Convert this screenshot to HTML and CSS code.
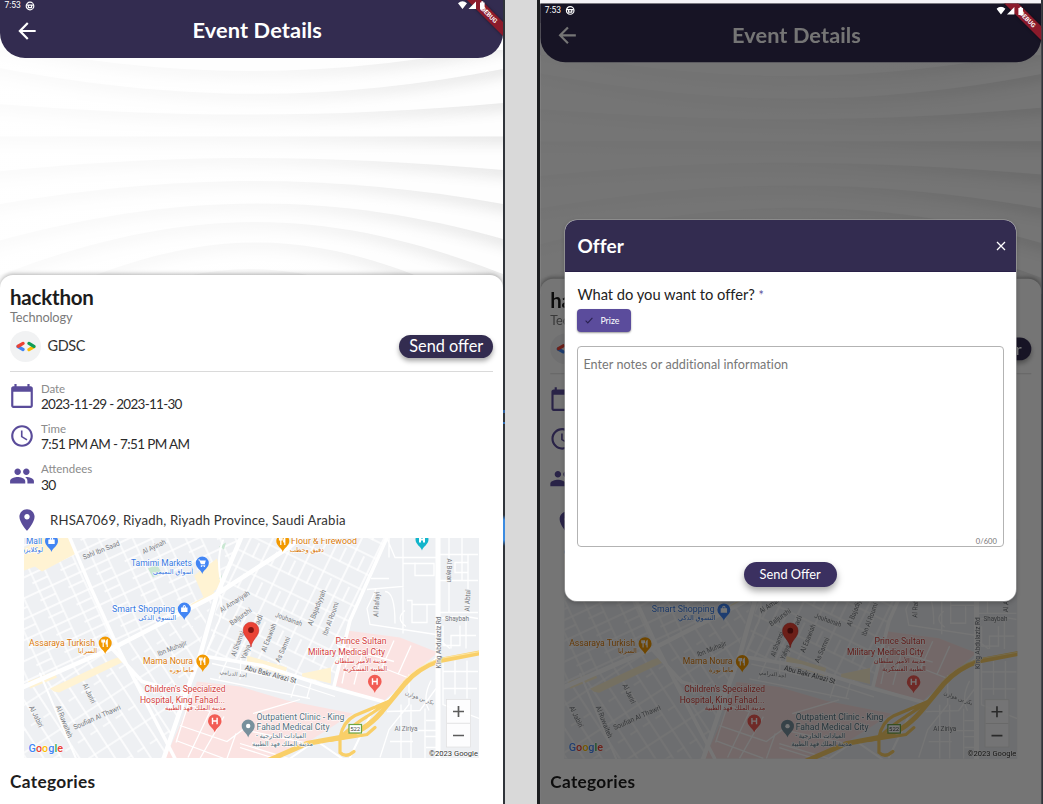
FILE: index.html
```html
<!DOCTYPE html>
<html lang="en">
<head>
<meta charset="utf-8">
<title>Event Details</title>
<link rel="stylesheet" href="styles.css">
</head>
<body>
<main class="board">
  <section class="phone phone-plain"><div class="screen"></div></section>
  <section class="phone phone-dialog">
    <div class="screen dimmed"></div>
    <div class="dialog">
      <header class="dialog-head">
        <h2 class="dialog-title">Offer</h2>
        <svg class="close" viewBox="0 0 10 10"><path d="M1 1l8 8M9 1l-8 8"/></svg>
      </header>
      <div class="dialog-body">
        <p class="question"><span class="question-text">What do you want to offer?</span> <span class="star">*</span></p>
        <span class="chip"><svg class="check" viewBox="0 0 8 7"><path d="M.6 3.6l2.2 2.3L7.4.8"/></svg><span class="chip-text">Prize</span></span>
        <div class="notes"><span class="placeholder">Enter notes or additional information</span><span class="counter">0/600</span></div>
        <div class="submit"><span class="submit-text">Send Offer</span></div>
      </div>
    </div>
  </section>
</main>

<template id="event-screen">
  <header class="appbar">
    <svg class="back" viewBox="0 0 24 24"><path d="M20 11H7.83l5.59-5.59L12 4l-8 8 8 8 1.41-1.41L7.83 13H20v-2z"/></svg>
    <h1 class="appbar-title">Event Details</h1>
  </header>
  <svg class="hero" viewBox="0 50 503 240">
    <defs>
      <filter id="fold" x="-5%" y="-5%" width="110%" height="110%">
        <feOffset in="SourceAlpha" dy="9" result="o"/>
        <feGaussianBlur in="o" stdDeviation="6" result="b"/>
        <feFlood flood-color="#000" flood-opacity=".165"/>
        <feComposite in2="b" operator="out" result="s"/>
        <feComposite in="s" in2="SourceAlpha" operator="in" result="i"/>
        <feMerge><feMergeNode in="SourceGraphic"/><feMergeNode in="i"/></feMerge>
      </filter>
      <linearGradient id="wash"><stop offset="0" stop-color="#fff" stop-opacity=".8"/><stop offset=".55" stop-color="#fff" stop-opacity=".62"/><stop offset="1" stop-color="#fff" stop-opacity="0"/></linearGradient>
    </defs>
    <rect y="50" width="503" height="240" fill="#fdfdfd"/>
    <g fill="#fefefe">
      <path filter="url(#fold)" d="M-60 30Q250 112 563 30V340H-60Z"/>
      <path filter="url(#fold)" d="M-60 56C160 104 320 104 503 69L563 56V340H-60Z"/>
      <path filter="url(#fold)" d="M-60 99C160 119 320 119 503 103L563 98V340H-60Z"/>
      <path filter="url(#fold)" d="M-60 136.500H563V340H-60Z"/>
      <path filter="url(#fold)" d="M-60 178C150 153 300 153 503 170L563 176V340H-60Z"/>
      <path filter="url(#fold)" d="M-60 215C150 174 310 170 503 204L563 215V340H-60Z"/>
      <path filter="url(#fold)" d="M-60 258C150 191 320 187 503 239L563 258V340H-60Z"/>
      <path filter="url(#fold)" d="M-60 300C160 203 310 199 503 274L563 300V340H-60Z"/>
      <path filter="url(#fold)" d="M-40 340C190 212 310 217 503 315L563 350V370H-60Z"/>
      <path filter="url(#fold)" d="M80 320Q250 218 420 320V370H80Z"/>
    </g>
    <rect y="50" width="503" height="240" fill="url(#wash)"/>
  </svg>
  <article class="card">
    <h2 class="event-name">hackthon</h2>
    <p class="event-kind">Technology</p>
    <div class="host">
      <span class="avatar"><svg viewBox="0 0 20 11"><g fill="none" stroke-width="3.300" stroke-linecap="round"><path d="M2 5.600L7 8.500" stroke="#4285f4"/><path d="M2.200 5.200L7 2.400" stroke="#ea4335"/><path d="M13 8.600l4.800-2.800" stroke="#fbbc04"/><path d="M13 2.400l4.900 2.900" stroke="#0f9d58"/></g></svg></span>
      <span class="host-name">GDSC</span>
      <span class="send"><span class="send-text">Send offer</span></span>
    </div>
    <dl class="facts">
      <div class="fact"><svg viewBox="0 0 24 24"><path d="M20 3h-1V1h-2v2H7V1H5v2H4c-1.100 0-2 .9-2 2v16c0 1.100.9 2 2 2h16c1.100 0 2-.9 2-2V5c0-1.100-.9-2-2-2zm0 18H4V8h16v13z"/></svg><div><dt class="l-date">Date</dt><dd class="v-date">2023-11-29 - 2023-11-30</dd></div></div>
      <div class="fact"><svg viewBox="0 0 24 24"><path d="M11.990 2C6.470 2 2 6.480 2 12s4.470 10 9.990 10C17.520 22 22 17.520 22 12S17.520 2 11.990 2zM12 20c-4.420 0-8-3.580-8-8s3.580-8 8-8 8 3.580 8 8-3.580 8-8 8zm.5-13H11v6l5.250 3.150.75-1.230-4.500-2.670z"/></svg><div><dt class="l-time">Time</dt><dd class="v-time">7:51 PM AM - 7:51 PM AM</dd></div></div>
      <div class="fact"><svg viewBox="0 0 24 24"><path d="M16 11c1.660 0 2.990-1.340 2.990-3S17.660 5 16 5c-1.660 0-3 1.340-3 3s1.340 3 3 3zm-8 0c1.660 0 2.990-1.340 2.990-3S9.660 5 8 5C6.340 5 5 6.340 5 8s1.340 3 3 3zm0 2c-2.330 0-7 1.170-7 3.500V19h14v-2.500c0-2.330-4.670-3.500-7-3.500zm8 0c-.29 0-.62.02-.97.05 1.160.84 1.970 1.970 1.970 3.450V19h6v-2.500c0-2.330-4.670-3.500-7-3.500z"/></svg><div><dt class="l-att">Attendees</dt><dd class="v-att">30</dd></div></div>
    </dl>
    <div class="place"><svg viewBox="0 0 24 24"><path d="M12 2C8.130 2 5 5.130 5 9c0 5.250 7 13 7 13s7-7.750 7-13c0-3.870-3.130-7-7-7zm0 9.500c-1.380 0-2.500-1.120-2.500-2.500s1.120-2.500 2.500-2.500 2.500 1.120 2.500 2.500-1.120 2.500-2.500 2.500z"/></svg><span class="address">RHSA7069, Riyadh, Riyadh Province, Saudi Arabia</span></div>
    <svg class="map" viewBox="24 537.500 454.500 220.500">
      <defs>
        <pattern id="gridA" width="31" height="19" patternUnits="userSpaceOnUse" patternTransform="rotate(-25)"><path d="M0 1H31M0 10H17M3 0V19M17 0V19" fill="none" stroke="#fff" stroke-width="1.300"/></pattern>
        <pattern id="gridB" width="34" height="20" patternUnits="userSpaceOnUse" patternTransform="rotate(-64)"><path d="M0 1H34M18 11H34M3 0V20M19 0V20" fill="none" stroke="#fff" stroke-width="1.300"/></pattern>
        <pattern id="gridC" width="40" height="15" patternUnits="userSpaceOnUse" patternTransform="rotate(57)"><path d="M0 1H40M4 0V15M25 0V9" fill="none" stroke="#fff" stroke-width="1.300"/></pattern>
      </defs>
      <rect x="24" y="537" width="456" height="222" fill="#eef0f3"/>
      <path fill="url(#gridA)" d="M24 537H242L215 597 24 687Z"/>
      <path fill="url(#gridC)" d="M24 687L118 645 213 596 188 687 165 758H24Z"/>
      <path fill="url(#gridB)" d="M242 537H387L347 627 334 685 205 655 220 592Z"/>
      <path fill="#fff3d3" d="M43 537H70L76 553 42 571 35 566 24 570V548ZM194 575L217 558 223 584 204 598ZM192 603L214 591 216 596 183 614ZM28 681l26-10 3 6-27 11zM50 688l62-29 12-4 2 5-67 32-5-1zM247 655l40 12-2 8-38-12zM302 673l29-6v16l-29-7z"/>
      <path fill="#c9e7d2" d="M148 568l9-4 5 9-9 4zM219 546l7-4-2 7zM219 578l5 3-3-7z"/>
      <path fill="#fbe3e2" d="M347 630L400 637 438 652 420 667 383 701 335 685ZM197 681L240 686 287 700 353 713 307 742 270 758H165L180 725Z"/>
      <g fill="none" stroke="#fff" stroke-width="1.300">
        <path d="M387 538L395 557H436M371 578H389M367 589L403 586V537M376 589L367 608 370 624 436 634M403 586V633M403 563H434V575H415V562M389 537V557M385 591q10 0 10 32M407 600h5v4h24M412 604v18h15v-18M405 610q-10 8 1 16M449 537V612M462 537V580M440 554H478M440 580H478M440 612H478M468 554V612M455 562h13v10h-13zM440 618q20-4 38 0M443 625v20h17v-20M466 618v30M451 648v-13h25M440 640l10 8"/>
        <path d="M384 702L439 655M387 711L420 710 436 688M409 674v30l-20 25-9 28M401 704v54M411 704v54M425 708v50M401 730h37M390 741h23M426 720h12M425 736h14M426 747h13M431 680q-9 18-2 30M443 662v42l36 14M455 660v34M443 671h35M443 688h34M467 660v38"/>
        <path d="M180 725l47 16 16-12 65 14M187 704l23 7-22 46M193 689l-17 53M224 716l-24 42M176 740l48 18M236 733l-9 25M240 743l49 15M240 747l35 11M253 713l47-14M337 645l57 16M350 645l-8 38M363 650l-9 34M394 640l-12 27 28 11M411 645l-13 29M210 678l100 20M212 663l70 16 53 17M227 660l-8 18M298 675l-7 22M312 679l-5 18M240 679l1-24"/>
      </g>
      <g fill="none" stroke="#fff" stroke-linecap="round" stroke-linejoin="round">
        <path stroke-width="3.500" d="M68 533L92 590 117 645 145 700 175 758M112 648L142 681 183 692"/>
        <path stroke-width="4.500" d="M20 688L118 645 213 596 290 546 305 533M242 535L217 594 200 655 187 690 163 760"/>
        <path stroke-width="3.500" d="M200 655L262 665 324 685 383 701M387 537L350 620 334 686"/>
        <path stroke-width="2" d="M223 540Q215 560 223 589M220 595Q224 613 217 625L205 655M40 673L76 758M316 740L290 758M316 740l29 20M375 705L350 757"/>
        <path stroke-width="5" d="M438 535V760"/>
      </g>
      <g fill="none" stroke="#f9cf68" stroke-linecap="round">
        <path stroke-width="5" d="M482 652L440 660Q419 667 405 683L382 711Q363 733 340 737L307 743 266 761"/>
        <path stroke-width="3.200" d="M391 700L355 715Q343 721 340 737V752Q346 758 354 751M340 737Q355 723 367 716L391 700M330 740L367 734 375 727"/>
      </g>
      <path d="M480 651L440 658Q415 665 397 687" stroke="#fff0bd" stroke-width=".7" fill="none"/>
      <g class="street">
        <text transform="translate(102 552) rotate(-22)" textLength="39">Sahl Ibn Saad</text>
        <text transform="translate(155 548.500) rotate(-25)" textLength="25">Al Ayinah</text>
        <text transform="translate(236 603) rotate(-33)" textLength="34">Al Amariyah</text>
        <text transform="translate(242 618) rotate(-35)" textLength="25">Baljurshi</text>
        <text transform="translate(240 644) rotate(-70)" textLength="26">Al Shamsi</text>
        <text transform="translate(248 652) rotate(-68)" textLength="15">Yahya</text>
        <text transform="translate(261 620) rotate(-68)" textLength="10">adi</text>
        <text transform="translate(288 621) rotate(20)" textLength="28">Jouhainah</text>
        <text transform="translate(271 638) rotate(-68)" textLength="30">Al Esawiah</text>
        <text transform="translate(285 650) rotate(-66)" textLength="27">As Samni</text>
        <text transform="translate(319 608) rotate(-68)" textLength="38">Al Bajadiyyah</text>
        <text transform="translate(333 619) rotate(-70)" textLength="35">Ibn Al Roumi</text>
        <text transform="translate(379 604) rotate(-87)" textLength="25">Al Rafayi</text>
        <text transform="translate(447 570) rotate(90)" textLength="24">Al Bayan</text>
        <text transform="translate(470 600) rotate(-88)" textLength="22">Al Abtal</text>
        <text transform="translate(457 620)" textLength="24">Shaybah</text>
        <text transform="translate(441 642) rotate(-90)" textLength="52">King Abdulaziz Rd</text>
        <text transform="translate(173 650) rotate(-22)" textLength="31">Ibn Muhajir</text>
        <text class="strong" transform="translate(270 676) rotate(15)" textLength="53">Abu Bakr Alrazi St</text>
        <text class="street-ar" transform="translate(233 675) rotate(8)">احد الدرامي</text>
        <text class="street-ar" transform="translate(419 699) rotate(20)">بكر بن هوازن</text>
        <text transform="translate(406 730)" textLength="23">Al Ziriya</text>
        <text transform="translate(87 694) rotate(64)" textLength="21">Al Jariri</text>
        <text transform="translate(34 717) rotate(64)" textLength="23">Al Jabiri</text>
        <text transform="translate(62 722) rotate(68)" textLength="34">Al Ruwaiteh</text>
        <text transform="translate(98 719) rotate(-24)" textLength="51">Soufian Al Thawri</text>
      </g>
      <g class="poi blue">
        <text x="26" y="543" textLength="16">Mall</text><text class="ar" x="43" y="551" direction="rtl">لوكلايزن</text>
        <text x="131" y="565" textLength="61">Tamimi Markets</text><text class="ar" x="193" y="573" direction="rtl">أسواق التميمي</text>
        <text x="112" y="611" textLength="63">Smart Shopping</text><text class="ar" x="176" y="619" direction="rtl">التسوق الذكي</text>
      </g>
      <g class="poi orange">
        <text x="29" y="645" textLength="66">Assaraya Turkish</text><text class="ar" x="97" y="652" direction="rtl">السرايا</text>
        <text x="143" y="663" textLength="50">Mama Noura</text><text class="ar" x="194" y="671" direction="rtl">ماما نورة</text>
        <text x="291" y="543" textLength="66">Flour &amp; Firewood</text><text class="ar" x="324" y="551" direction="rtl">دقيق وحطب</text>
      </g>
      <g class="poi red">
        <text x="335.500" y="643" textLength="51">Prince Sultan</text><text x="308" y="654" textLength="77">Military Medical City</text>
        <text class="ar" x="387" y="662" direction="rtl">مدينة الأمير سلطان</text><text class="ar" x="387" y="670.500" direction="rtl">الطبية العسكرية</text>
        <text x="144.500" y="691" textLength="81">Children's Specialized</text><text x="140" y="702" textLength="85">Hospital, King Fahad...</text>
        <text class="ar" x="226" y="709.500" direction="rtl">مدينة الملك فهد الطبية</text>
      </g>
      <g class="poi slate">
        <text x="256.500" y="719" textLength="88">Outpatient Clinic - King</text><text x="256.500" y="729.500" textLength="73">Fahad Medical City</text>
        <text class="ar" x="306" y="737.500" direction="rtl">العيادات الخارجية -</text><text class="ar" x="313" y="745.500" direction="rtl">مدينة الملك فهد الطبية</text>
      </g>
      <g transform="translate(51.500 540.500)"><path fill="#4285f4" d="M0 11C-1 7-6.500 5-6.500 0a6.500 6.500 0 0 1 13 0C6.500 5 1 7 0 11Z"/><path fill="#fff" d="M-3.200-1.500h6.400v4.500h-6.400zM-1.700-1.500q0-2.500 1.700-2.500t1.700 2.500h-1q0-1.500-.7-1.500t-.7 1.500z"/></g>
      <g transform="translate(202.300 562.500)"><path fill="#4285f4" d="M0 11C-1 7-6.500 5-6.500 0a6.500 6.500 0 0 1 13 0C6.500 5 1 7 0 11Z"/><path fill="#fff" d="M-4-3.500h1.500l.5 1H3.500L2.500 1h-4L-3-2.700h-1zM-1.500 1.700H3v.7h-4.500z"/><circle cx="-.8" cy="3.200" r=".8" fill="#fff"/><circle cx="2" cy="3.200" r=".8" fill="#fff"/></g>
      <g transform="translate(184.300 608.500)"><path fill="#4285f4" d="M0 11C-1 7-6.500 5-6.500 0a6.500 6.500 0 0 1 13 0C6.500 5 1 7 0 11Z"/><path fill="#fff" d="M-3.200-1.500h6.400v4.500h-6.400zM-1.700-1.500q0-2.500 1.700-2.500t1.700 2.500h-1q0-1.500-.7-1.500t-.7 1.500z"/></g>
      <g transform="translate(105.200 642.500)"><path fill="#f29900" d="M0 11C-1 7-6.500 5-6.500 0a6.500 6.500 0 0 1 13 0C6.500 5 1 7 0 11Z"/><path stroke="#fff" stroke-width="1.200" fill="none" d="M-2-3.500V4M-3.300-3.500V-1h2.600v-2.500M2 4V-3q-1.400 1-1 4h1"/></g>
      <g transform="translate(202.800 660.500)"><path fill="#f29900" d="M0 11C-1 7-6.500 5-6.500 0a6.500 6.500 0 0 1 13 0C6.500 5 1 7 0 11Z"/><path stroke="#fff" stroke-width="1.200" fill="none" d="M-2-3.500V4M-3.300-3.500V-1h2.600v-2.500M2 4V-3q-1.400 1-1 4h1"/></g>
      <g transform="translate(282.800 540.500)"><path fill="#f29900" d="M0 11C-1 7-6.500 5-6.500 0a6.500 6.500 0 0 1 13 0C6.500 5 1 7 0 11Z"/><path stroke="#fff" stroke-width="1.200" fill="none" d="M-2-3.500V4M-3.300-3.500V-1h2.600v-2.500M2 4V-3q-1.400 1-1 4h1"/></g>
      <g transform="translate(422 539)"><path fill="#12b5cb" d="M0 11C-1 7-6.500 5-6.500 0a6.500 6.500 0 0 1 13 0C6.500 5 1 7 0 11Z"/><path fill="#fff" d="M-3-3h2v2h2v-2h2v6h-2v-2h-2v2h-2z"/></g>
      <g transform="translate(374.800 681)"><path fill="#f25c54" d="M0 11.500C-1 7-6.800 5-6.800 0a6.800 6.800 0 0 1 13.600 0C6.800 5 1 7 0 11.500Z"/><path stroke="#fff" stroke-width="1.400" fill="none" d="M-2.300-3.200v6.400M2.300-3.200v6.400M-2.300 0h4.600"/></g>
      <g transform="translate(214.800 720.500)"><path fill="#f25c54" d="M0 11.500C-1 7-6.800 5-6.800 0a6.800 6.800 0 0 1 13.600 0C6.800 5 1 7 0 11.500Z"/><path stroke="#fff" stroke-width="1.400" fill="none" d="M-2.300-3.200v6.400M2.300-3.200v6.400M-2.300 0h4.600"/></g>
      <g transform="translate(248.200 725.500)"><path fill="#78909c" d="M0 11.500C-1 7-6.500 5-6.500 0a6.500 6.500 0 0 1 13 0C6.500 5 1 7 0 11.500Z"/><circle r="2.200" fill="#fff"/></g>
      <g transform="translate(251 629.500)"><path fill="#ea4335" stroke="#c5221f" stroke-width=".5" d="M0 17C-1 9-7.800 7-7.800 0a7.800 7.800 0 0 1 15.600 0C7.800 7 1 9 0 17Z"/><circle r="2.900" fill="#811411"/></g>
      <g><rect x="349" y="724" width="12.500" height="8.500" fill="#fff" stroke="#6ba543" stroke-width="1.200"/><text class="shield" x="355.200" y="730.500">522</text></g>
      <g class="logo"><text x="28.500" y="751" textLength="34.500"><tspan fill="#4285f4">G</tspan><tspan fill="#ea4335">o</tspan><tspan fill="#fbbc04">o</tspan><tspan fill="#4285f4">g</tspan><tspan fill="#34a853">l</tspan><tspan fill="#ea4335">e</tspan></text></g>
      <rect x="446.500" y="699" width="24" height="47.500" fill="#fff" fill-opacity=".85" stroke="#ddd" stroke-width=".6"/>
      <path d="M447 722.800h23" stroke="#ddd" stroke-width=".8"/>
      <path d="M453 711h11M458.500 705.500v11M453 735h11" stroke="#5c5c5c" stroke-width="1.700"/>
      <text class="copy" x="429" y="755.300" textLength="49">©2023 Google</text>
    </svg>
    <h3 class="section-title">Categories</h3>
  </article>
</template>

<template id="screen-status">
  <div class="ribbon">DEBUG</div>
  <div class="status">
    <span class="clock">7:53</span>
    <svg class="globe" viewBox="0 0 10 10"><circle cx="5" cy="5" r="3.800"/><path d="M1.500 4.200h7M3.400 4.400v2.200h3.200V4.400"/></svg>
    <svg class="signals" viewBox="0 0 30 9"><path d="M0 2.200Q4.500-1.500 9 2.200L4.500 8ZM18 .5V8H10.500ZM22 1.500h1.300V.2h2V1.500h1.300V8.500H22Z"/></svg>
  </div>
</template>
<script src="app.js"></script>
</body>
</html>
```
FILE: app.js
```js
// Both phones show the same event; the second one is dimmed behind its dialog.
const eventScreen = document.getElementById('event-screen');
const status = document.getElementById('screen-status');

document.querySelectorAll('.screen').forEach((screen) => {
  const app = document.createElement('div');
  app.className = 'app';
  app.append(eventScreen.content.cloneNode(true));
  screen.append(app, status.content.cloneNode(true));
});

document.querySelectorAll('.map text[textLength], .logo text').forEach((label) => {
  label.setAttribute('lengthAdjust', 'spacingAndGlyphs');
});
```
FILE: styles.css
```css
* { box-sizing: border-box; }
body { margin: 0; font-family: Lato, "Open Sans", sans-serif; color: #222; }
h1, h2, h3, p, dl, dd { margin: 0; }
svg { display: block; flex: none; }

.board { width: 1043px; height: 804px; display: flex; justify-content: space-between; background: #d9d9d9; overflow: hidden; }
.phone { position: relative; height: 804px; overflow: hidden; flex: none; }
.phone-plain { width: 505px; padding-right: 2px; background: linear-gradient(#30343a 0 410px, #2c5f9c 410px 413px, #30343a 413px 422px, #2f6fb5 422px 424px, #30343a 424px 515px, #3b8be0 520px 540px, #30343a 546px); }
.phone-dialog { width: 506px; padding: 0 2px 0 3px; background: linear-gradient(90deg, #1b1d1f 0 3px, transparent 3px 504px, #30343a 504px), #f4f2f6; }

.screen { position: relative; width: 503px; height: 804px; overflow: hidden; background: #fff; }
.dimmed { top: -1.5px; height: 806px; transform: translate(.3px, 4.5px) scale(.996, .994); transform-origin: 0 0; background: #757575; }
.dimmed .app { padding-top: 1.5px; filter: brightness(.46); background: #332c50 linear-gradient(#332c50 0 20px, #fff 20px); }
.dimmed .status, .dimmed .ribbon { margin-top: 1.5px; }
.app { height: 100%; background: #fff; display: flex; flex-direction: column; }

.appbar { position: relative; z-index: 1; width: 503px; height: 57.5px; flex: none; background: #332c50; border-radius: 0 0 25px 25px; display: grid; grid-template-columns: 40px 1fr 33px; align-items: center; padding: 4px 0 0 14px; }
.back { width: 26px; height: 26px; fill: #fff; }
.appbar-title { text-align: center; color: #fff; font-size: 21.8px; line-height: 26px; font-weight: 700; padding: 0 9.5px 1px 0; letter-spacing: .1px; }
.hero { width: 503px; height: 240px; margin-top: -7.5px; }

.card { position: relative; margin-top: -15px; height: 540px; flex: none; background: #fff; border-radius: 13px 13px 0 0; box-shadow: 0 -1px 4px rgba(0,0,0,.3); padding: 9.5px 10px 0; }
.event-name { font-size: 20.5px; line-height: 24px; font-weight: 700; color: #1c1c1c; letter-spacing: -.2px; }
.event-kind { font-size: 12.8px; line-height: 16px; color: #7b7b7b; letter-spacing: -.15px; }
.host { height: 47px; border-bottom: 1px solid #dadada; display: flex; align-items: center; padding-bottom: 3px; }
.avatar { width: 31px; height: 31px; border-radius: 50%; background: #f1f2f3; display: grid; place-items: center; }
.avatar svg { width: 20px; height: 11px; }
.host-name { margin-left: 6.5px; font-size: 14.5px; line-height: 18px; color: #333; letter-spacing: -.4px; }
.send { margin-left: auto; width: 94.5px; height: 23px; border-radius: 12px; background: #332c50; box-shadow: 0 3px 5px rgba(0,0,0,.35); display: grid; place-items: center; }
.send-text { color: #fff; font-size: 16.3px; line-height: 20px; white-space: nowrap; padding-left: 1px; }
.facts { padding-top: 9px; }
.fact { height: 40.2px; display: flex; align-items: flex-start; gap: 6px; }
.fact svg { width: 26px; height: 26px; margin: 2.5px 0 0 -1px; fill: #5a4c9a; }
dt { font-size: 11.5px; line-height: 15px; color: #8b8b8b; }
dd { font-size: 13.8px; line-height: 17px; color: #2b2b2b; white-space: nowrap; }
.l-date { letter-spacing: -.1px; }
.v-date { font-size: 13.5px; letter-spacing: -.72px; }
.v-time { font-size: 13.5px; letter-spacing: -.65px; }
.v-att { letter-spacing: -.7px; }
.place { height: 36.5px; display: flex; align-items: center; padding: 1.5px 0 0 4px; gap: 10px; }
.place svg { width: 26px; height: 26px; fill: #5a4c9a; }
.address { font-size: 13.2px; line-height: 17px; color: #333; white-space: nowrap; letter-spacing: .17px; }
.map { width: 454.5px; height: 220.5px; margin-left: 14px; }
.section-title { margin-top: 12.8px; font-size: 17.3px; line-height: 22px; font-weight: 700; color: #1d1d1d; letter-spacing: .32px; }

.map text { font-family: Roboto, "DejaVu Sans", sans-serif; }
.street text { font-size: 7.2px; fill: #74787e; text-anchor: middle; stroke: #f4f5f6; stroke-width: 1px; paint-order: stroke; }
.street .strong { fill: #55585c; }
.street .street-ar { font-size: 5.6px; }
.poi text { font-size: 8.8px; stroke: #fff; stroke-width: 1.2px; paint-order: stroke; }
.poi .ar { font-size: 6.6px; }
.blue { fill: #3778df; }
.orange { fill: #d8790a; }
.red { fill: #d3403c; }
.slate { fill: #587280; }
.map .shield { font-size: 6px; text-anchor: middle; fill: #444; }
.map .logo text { font-size: 11px; font-weight: 500; stroke: #fff; stroke-width: 1px; paint-order: stroke; }
.map .copy { font-size: 8px; fill: #333; stroke: #fff; stroke-width: 1px; paint-order: stroke; }

/* status bar and debug ribbon float over the app bar */
.status { position: absolute; z-index: 3; inset: 0 0 auto 0; height: 11px; display: flex; align-items: center; padding-left: 4.5px; }
.clock { font: 8.5px/11px Roboto, sans-serif; color: #fff; }
.globe { width: 10px; height: 10px; margin-left: 4px; fill: none; stroke: #fff; stroke-width: 1.2px; }
.signals { width: 30px; height: 9px; margin-left: auto; margin-right: 15px; fill: #fff; }
.ribbon { position: absolute; z-index: 2; top: 7.5px; right: -24px; width: 80px; height: 10px; transform: rotate(45deg); background: #8b1a2b; color: #fff; font: 700 6.3px/10px Roboto, sans-serif; text-align: center; padding-left: 6px; box-shadow: 0 0 3px rgba(0,0,0,.5); }

.dialog { position: absolute; z-index: 5; left: 28px; top: 220px; width: 451px; height: 381px; border-radius: 12px; background: #fff; overflow: hidden; box-shadow: 0 0 0 .6px #aaa, 0 2px 5px rgba(0,0,0,.25); }
.dialog-head { height: 52px; background: #332c50; border-bottom: 1px solid #292047; display: flex; align-items: center; justify-content: space-between; padding: 0 10px 0 12.5px; }
.dialog-title { font-size: 19px; line-height: 24px; font-weight: 700; color: #fff; letter-spacing: .1px; }
.close { width: 10px; height: 10px; fill: none; stroke: #fff; stroke-width: 1.3px; }
.dialog-body { padding: 12px 12px 0 12.4px; display: flex; flex-direction: column; align-items: flex-start; }
.question { height: 20px; font-size: 14.7px; line-height: 20px; color: #222; white-space: nowrap; letter-spacing: -.02px; }
.star { font-size: 12.5px; color: #5a4c9a; }
.chip { margin-top: 4.5px; width: 53.5px; height: 23.5px; border-radius: 4px; background: #5b4c9c; box-shadow: 0 1px 2px rgba(0,0,0,.4); display: flex; align-items: center; padding-left: 8px; gap: 7px; }
.check { width: 8px; height: 7px; fill: none; stroke: #2a2150; stroke-width: 1.1px; }
.chip-text { font-size: 8.8px; line-height: 11px; color: #fff; }
.notes { margin-top: 14px; width: 426.5px; height: 201px; border: 1px solid #b3b3b3; border-radius: 4px; padding: 9px 6px 0 5px; display: flex; flex-direction: column; justify-content: space-between; }
.placeholder { font-size: 12.6px; line-height: 18px; color: #777; letter-spacing: .05px; }
.counter { align-self: flex-end; font-size: 7.6px; line-height: 10px; color: #777; }
.submit { align-self: center; margin: 14.5px 0 0 -1px; width: 93px; height: 25px; border-radius: 13px; background: #3b3060; box-shadow: 0 4px 7px rgba(0,0,0,.35); display: grid; place-items: center; }
.submit-text { color: #fff; font-size: 12.8px; line-height: 18px; }
```
